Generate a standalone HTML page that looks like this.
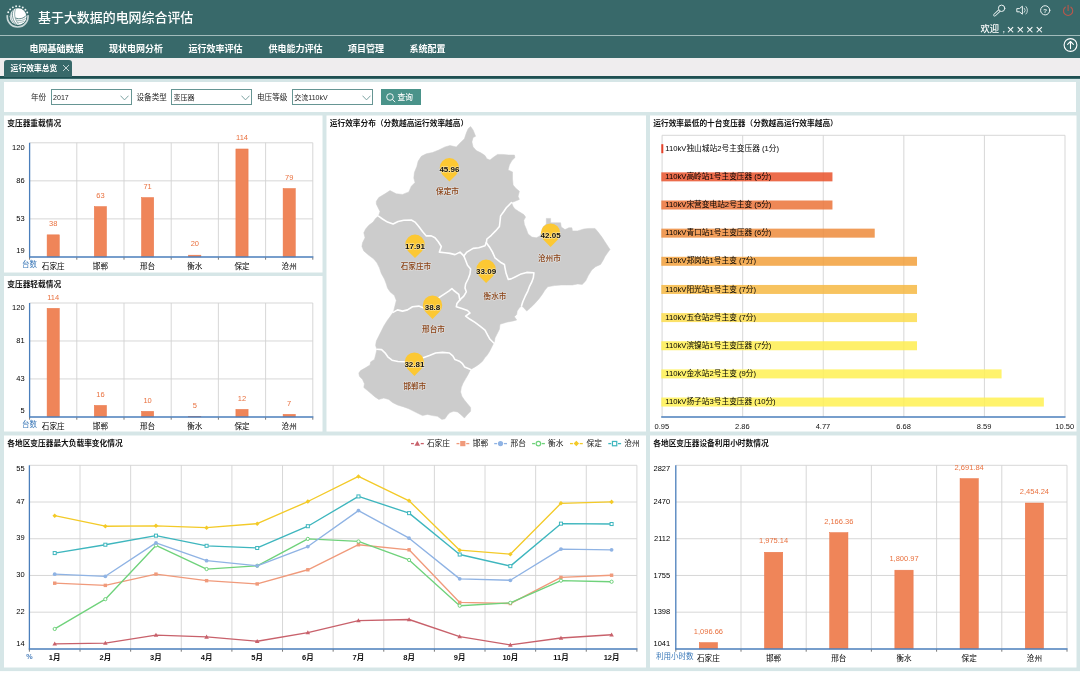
<!DOCTYPE html>
<html lang="zh-CN"><head><meta charset="utf-8"><title>基于大数据的电网综合评估</title>
<style>
html,body{margin:0;padding:0}
body{width:1080px;height:675px;overflow:hidden;background:#d6e6e7;font-family:"Liberation Sans","Noto Sans CJK SC",sans-serif;position:relative;color:#222}
.abs{position:absolute}
#hdr{left:0;top:0;width:1080px;height:35px;background:#38696a}
#hline{left:0;top:35.4px;width:1080px;height:1.1px;background:#a2bcbc}
#nav{left:0;top:36px;width:1080px;height:22px;background:#38696a}
#title{left:38px;top:0;height:35px;line-height:35.6px;font-size:12.95px;font-weight:500;color:#fff;white-space:nowrap}
.nv{position:absolute;top:0;height:22px;line-height:26.2px;font-size:9px;font-weight:bold;color:#fff;white-space:nowrap}
#welcome{left:980.5px;top:22.2px;font-size:9.3px;font-weight:500;line-height:14px;color:#fff;white-space:nowrap}
#welcome .cm{margin-left:3.4px}
#welcome .xx{font-size:13px;font-weight:normal;margin-left:2px;line-height:14px;vertical-align:-1.4px}
#welcome .cm+.xx{margin-left:1.7px}
#tabbar{left:0;top:58px;width:1080px;height:19px;background:#efedee}
#tabline{left:0;top:76px;width:1080px;height:2.7px;background:linear-gradient(#1f4f51 0,#1f4f51 60%,#4d7f80 100%)}
#tab{left:4px;top:60.2px;width:68px;height:17px;background:#38696a;border-radius:3px 3px 0 0;color:#fff;font-size:7.8px;font-weight:bold;line-height:17px;white-space:nowrap}
#tab span.t{position:absolute;left:6.6px;top:0}
#filter{left:4px;top:82px;width:1072px;height:29.7px;background:#fff}
.lb{position:absolute;top:89.3px;height:15.2px;line-height:18px;font-size:7.6px;color:#222;white-space:nowrap}
.sel{position:absolute;top:89.3px;height:13.6px;border:0.8px solid #669593;background:#fff;font-size:7px;line-height:15.2px;color:#222;white-space:nowrap;box-sizing:content-box}
.sel span{position:absolute;left:1.6px;top:0}
.sel svg{position:absolute;right:1.5px;top:4.9px}
#btn{left:380.8px;top:89px;width:40px;height:15.5px;background:#4a938a;color:#fff;font-size:7.7px;font-weight:500;line-height:17.6px;white-space:nowrap}
#btn span{position:absolute;left:16.8px;top:0}
svg text{font-family:"Liberation Sans","Noto Sans CJK SC",sans-serif}
#wrap{position:absolute;left:0;top:0;width:1080px;height:675px;will-change:transform}
</style></head><body><div id="wrap">
<div id="hdr" class="abs"></div><div id="hline" class="abs"></div><div id="nav" class="abs">
<div class="nv" style="left:29.4px">电网基础数据</div><div class="nv" style="left:108.9px">现状电网分析</div><div class="nv" style="left:188.4px">运行效率评估</div><div class="nv" style="left:268.4px">供电能力评估</div><div class="nv" style="left:347.9px">项目管理</div><div class="nv" style="left:409.4px">系统配置</div>
</div>
<div id="title" class="abs">基于大数据的电网综合评估</div>
<div id="welcome" class="abs">欢迎<span class="cm">,</span><span class="xx">×</span><span class="xx">×</span><span class="xx">×</span><span class="xx">×</span></div>
<svg class="abs" style="left:0;top:0" width="1080" height="60" viewBox="0 0 1080 60">
<!-- logo -->
<g fill="#f2f7f7"><circle cx="27.24" cy="12.57" r="0.95"/><circle cx="25.42" cy="9.68" r="0.95"/><circle cx="22.76" cy="7.54" r="0.95"/><circle cx="19.55" cy="6.37" r="0.95"/><circle cx="16.13" cy="6.31" r="0.95"/><circle cx="12.88" cy="7.36" r="0.95"/><circle cx="10.14" cy="9.40" r="0.95"/><circle cx="8.22" cy="12.22" r="0.95"/></g>
<path d="M7.35 15.15A10.4 10.4 0 1 0 27.95 15.15" fill="none" stroke="#eaf2f2" stroke-width="1.7" stroke-opacity="0.82"/>
<circle cx="18.1" cy="16.6" r="8.4" fill="#fff"/>
<g fill="none" stroke="#38696a" stroke-width="0.7">
<path d="M13.4 9.7C11.4 14 12.4 20.6 17 24.8"/><path d="M15.5 9.2C13.7 14 14.7 19.6 18.7 24.4" stroke-width="0.55"/>
<path d="M15.5 18C19.4 19.5 23.5 18.7 26.4 15.3" stroke-width="0.8"/><path d="M16.3 20.1C20 21.1 23.4 20.4 25.6 18.4" stroke-width="0.5"/><path d="M17.3 22.1C20 22.7 22.4 22.3 24.2 21" stroke-width="0.45"/>
<path d="M11.1 12.6C10.1 16 11.1 20.6 14.6 23.8" stroke-width="0.5"/>
</g>
<!-- icons -->
<g fill="none" stroke="#e9f1f1" stroke-width="1" stroke-linecap="round" stroke-linejoin="round">
<path d="M999.6 10.4L994.7 15" stroke-width="2.9"/><path d="M999.6 10.4L994.7 15" stroke="#38696a" stroke-width="1.2"/><circle cx="1001.6" cy="8.3" r="3.2" fill="#38696a"/>
<path d="M1017.2 8.6h2.2l3-2.4v8l-3-2.4h-2.2z"/><path d="M1024.3 8.2a3 3 0 0 1 0 4.2M1026 6.6a5.2 5.2 0 0 1 0 7.4" stroke-width="0.8"/>
<circle cx="1045.2" cy="10.3" r="4.6"/>
<circle cx="1070.5" cy="45" r="6.4" stroke="#fff" stroke-width="1.1"/><path d="M1070.5 48.6V41.6M1067.6 44.4L1070.5 41.5L1073.4 44.4" stroke="#fff" stroke-width="1.1"/>
</g>
<text x="1045.2" y="12.5" font-size="6.2" text-anchor="middle" fill="#e9f1f1" font-weight="bold">?</text>
<g fill="none" stroke="#b8574c" stroke-width="1.1" stroke-linecap="round"><path d="M1065.3 7.2a4.6 4.6 0 1 0 5.6 0"/><path d="M1068.1 5.4v5"/></g>
</svg>
<div id="tabbar" class="abs"></div><div id="tabline" class="abs"></div>
<div id="tab" class="abs"><span class="t">运行效率总览</span>
<svg class="abs" style="left:57.8px;top:3.8px" width="8" height="8" viewBox="0 0 8 8"><path d="M1 1L7 7M7 1L1 7" stroke="#e8f0f0" stroke-width="0.8"/></svg></div>
<div id="filter" class="abs"></div>
<div class="lb" style="left:31px">年份</div>
<div class="sel" style="left:50.5px;width:79.4px"><span>2017</span><svg width="9" height="6" viewBox="0 0 9 6"><path d="M0.5 0.7L4.5 4.9L8.5 0.7" fill="none" stroke="#6f9a99" stroke-width="0.9"/></svg></div>
<div class="lb" style="left:136.5px">设备类型</div>
<div class="sel" style="left:171px;width:79.4px"><span>变压器</span><svg width="9" height="6" viewBox="0 0 9 6"><path d="M0.5 0.7L4.5 4.9L8.5 0.7" fill="none" stroke="#6f9a99" stroke-width="0.9"/></svg></div>
<div class="lb" style="left:257px">电压等级</div>
<div class="sel" style="left:291.7px;width:79.4px"><span>交流110kV</span><svg width="9" height="6" viewBox="0 0 9 6"><path d="M0.5 0.7L4.5 4.9L8.5 0.7" fill="none" stroke="#6f9a99" stroke-width="0.9"/></svg></div>
<div id="btn" class="abs"><svg class="abs" style="left:4.5px;top:2.9px" width="12" height="12" viewBox="0 0 12 12"><circle cx="5" cy="5" r="3.3" fill="none" stroke="#fff" stroke-width="0.9"/><path d="M7.4 7.4L10.2 10.2" stroke="#fff" stroke-width="0.9"/></svg><span>查询</span></div>
<svg class="abs" style="left:0;top:0" width="1080" height="675" viewBox="0 0 1080 675">
<rect x="0" y="671.1" width="1080" height="4" fill="#fff" />
<rect x="4" y="115.5" width="318.5" height="157" fill="#fff" />
<text x="7.3" y="126.37" font-size="7.7" text-anchor="start" font-weight="bold" fill="#111" >变压器重载情况</text>
<rect x="4" y="276" width="318.5" height="155.5" fill="#fff" />
<text x="7.3" y="286.87" font-size="7.7" text-anchor="start" font-weight="bold" fill="#111" >变压器轻载情况</text>
<rect x="326.5" y="115.5" width="319.5" height="316" fill="#fff" />
<text x="329.8" y="126.37" font-size="7.7" text-anchor="start" font-weight="bold" fill="#111" >运行效率分布（分数越高运行效率越高）</text>
<rect x="650" y="115.5" width="426.5" height="316" fill="#fff" />
<text x="653.3" y="126.37" font-size="7.7" text-anchor="start" font-weight="bold" fill="#111" >运行效率最低的十台变压器（分数越高运行效率越高）</text>
<rect x="4" y="435.5" width="642" height="232" fill="#fff" />
<text x="7.3" y="446.37" font-size="7.7" text-anchor="start" font-weight="bold" fill="#111" >各地区变压器最大负载率变化情况</text>
<rect x="650" y="435.5" width="426.5" height="232" fill="#fff" />
<text x="653.3" y="446.37" font-size="7.7" text-anchor="start" font-weight="bold" fill="#111" >各地区变压器设备利用小时数情况</text>
<line x1="29.6" y1="218.87" x2="312.8" y2="218.87" stroke="#d3d3d3" stroke-width="0.9" />
<line x1="29.6" y1="180.83" x2="312.8" y2="180.83" stroke="#d3d3d3" stroke-width="0.9" />
<line x1="29.6" y1="142.8" x2="312.8" y2="142.8" stroke="#d3d3d3" stroke-width="0.9" />
<line x1="76.8" y1="142.8" x2="76.8" y2="256.9" stroke="#d3d3d3" stroke-width="0.9" />
<line x1="124" y1="142.8" x2="124" y2="256.9" stroke="#d3d3d3" stroke-width="0.9" />
<line x1="171.2" y1="142.8" x2="171.2" y2="256.9" stroke="#d3d3d3" stroke-width="0.9" />
<line x1="218.4" y1="142.8" x2="218.4" y2="256.9" stroke="#d3d3d3" stroke-width="0.9" />
<line x1="265.6" y1="142.8" x2="265.6" y2="256.9" stroke="#d3d3d3" stroke-width="0.9" />
<line x1="312.8" y1="142.8" x2="312.8" y2="256.9" stroke="#d3d3d3" stroke-width="0.9" />
<text x="24.6" y="253.4" font-size="7.5" text-anchor="end" fill="#000" >19</text>
<text x="24.6" y="221.07" font-size="7.5" text-anchor="end" fill="#000" >53</text>
<text x="24.6" y="183.03" font-size="7.5" text-anchor="end" fill="#000" >86</text>
<text x="24.6" y="149.6" font-size="7.5" text-anchor="end" fill="#000" >120</text>
<rect x="47.1" y="234.84" width="12.2" height="22.06" fill="#ef8559" stroke="#ea7446" stroke-width="0.5"/>
<text x="53.2" y="226.04" font-size="7.5" text-anchor="middle" fill="#e9713f" >38</text>
<text x="53.2" y="269.14" font-size="7.6" text-anchor="middle" fill="#000" >石家庄</text>
<rect x="94.3" y="206.59" width="12.2" height="50.31" fill="#ef8559" stroke="#ea7446" stroke-width="0.5"/>
<text x="100.4" y="197.79" font-size="7.5" text-anchor="middle" fill="#e9713f" >63</text>
<text x="100.4" y="269.14" font-size="7.6" text-anchor="middle" fill="#000" >邯郸</text>
<rect x="141.5" y="197.56" width="12.2" height="59.34" fill="#ef8559" stroke="#ea7446" stroke-width="0.5"/>
<text x="147.6" y="188.76" font-size="7.5" text-anchor="middle" fill="#e9713f" >71</text>
<text x="147.6" y="269.14" font-size="7.6" text-anchor="middle" fill="#000" >邢台</text>
<rect x="188.7" y="255.17" width="12.2" height="1.73" fill="#ef8559" stroke="#ea7446" stroke-width="0.5"/>
<text x="194.8" y="246.37" font-size="7.5" text-anchor="middle" fill="#e9713f" >20</text>
<text x="194.8" y="269.14" font-size="7.6" text-anchor="middle" fill="#000" >衡水</text>
<rect x="235.9" y="148.98" width="12.2" height="107.92" fill="#ef8559" stroke="#ea7446" stroke-width="0.5"/>
<text x="242" y="140.18" font-size="7.5" text-anchor="middle" fill="#e9713f" >114</text>
<text x="242" y="269.14" font-size="7.6" text-anchor="middle" fill="#000" >保定</text>
<rect x="283.1" y="188.52" width="12.2" height="68.38" fill="#ef8559" stroke="#ea7446" stroke-width="0.5"/>
<text x="289.2" y="179.72" font-size="7.5" text-anchor="middle" fill="#e9713f" >79</text>
<text x="289.2" y="269.14" font-size="7.6" text-anchor="middle" fill="#000" >沧州</text>
<line x1="29.6" y1="142.8" x2="29.6" y2="257.6" stroke="#4a7ebb" stroke-width="1.3" />
<line x1="29" y1="256.9" x2="313.4" y2="256.9" stroke="#4a7ebb" stroke-width="1.5" />
<line x1="29.6" y1="257.6" x2="29.6" y2="259.7" stroke="#555" stroke-width="0.8" />
<line x1="76.8" y1="257.6" x2="76.8" y2="259.7" stroke="#555" stroke-width="0.8" />
<line x1="124" y1="257.6" x2="124" y2="259.7" stroke="#555" stroke-width="0.8" />
<line x1="171.2" y1="257.6" x2="171.2" y2="259.7" stroke="#555" stroke-width="0.8" />
<line x1="218.4" y1="257.6" x2="218.4" y2="259.7" stroke="#555" stroke-width="0.8" />
<line x1="265.6" y1="257.6" x2="265.6" y2="259.7" stroke="#555" stroke-width="0.8" />
<line x1="312.8" y1="257.6" x2="312.8" y2="259.7" stroke="#555" stroke-width="0.8" />
<text x="21.9" y="266.9" font-size="7.5" text-anchor="start" fill="#3a78b8" >台数</text>
<line x1="29.6" y1="378.93" x2="312.8" y2="378.93" stroke="#d3d3d3" stroke-width="0.9" />
<line x1="29.6" y1="340.97" x2="312.8" y2="340.97" stroke="#d3d3d3" stroke-width="0.9" />
<line x1="29.6" y1="303" x2="312.8" y2="303" stroke="#d3d3d3" stroke-width="0.9" />
<line x1="76.8" y1="303" x2="76.8" y2="416.9" stroke="#d3d3d3" stroke-width="0.9" />
<line x1="124" y1="303" x2="124" y2="416.9" stroke="#d3d3d3" stroke-width="0.9" />
<line x1="171.2" y1="303" x2="171.2" y2="416.9" stroke="#d3d3d3" stroke-width="0.9" />
<line x1="218.4" y1="303" x2="218.4" y2="416.9" stroke="#d3d3d3" stroke-width="0.9" />
<line x1="265.6" y1="303" x2="265.6" y2="416.9" stroke="#d3d3d3" stroke-width="0.9" />
<line x1="312.8" y1="303" x2="312.8" y2="416.9" stroke="#d3d3d3" stroke-width="0.9" />
<text x="24.6" y="413.4" font-size="7.5" text-anchor="end" fill="#000" >5</text>
<text x="24.6" y="381.13" font-size="7.5" text-anchor="end" fill="#000" >43</text>
<text x="24.6" y="343.17" font-size="7.5" text-anchor="end" fill="#000" >81</text>
<text x="24.6" y="309.8" font-size="7.5" text-anchor="end" fill="#000" >120</text>
<rect x="47.1" y="308.34" width="12.2" height="108.56" fill="#ef8559" stroke="#ea7446" stroke-width="0.5"/>
<text x="53.2" y="299.54" font-size="7.5" text-anchor="middle" fill="#e9713f" >114</text>
<text x="53.2" y="429.14" font-size="7.6" text-anchor="middle" fill="#000" >石家庄</text>
<rect x="94.3" y="405.41" width="12.2" height="11.49" fill="#ef8559" stroke="#ea7446" stroke-width="0.5"/>
<text x="100.4" y="396.61" font-size="7.5" text-anchor="middle" fill="#e9713f" >16</text>
<text x="100.4" y="429.14" font-size="7.6" text-anchor="middle" fill="#000" >邯郸</text>
<rect x="141.5" y="411.35" width="12.2" height="5.55" fill="#ef8559" stroke="#ea7446" stroke-width="0.5"/>
<text x="147.6" y="402.55" font-size="7.5" text-anchor="middle" fill="#e9713f" >10</text>
<text x="147.6" y="429.14" font-size="7.6" text-anchor="middle" fill="#000" >邢台</text>
<rect x="188.7" y="416.3" width="12.2" height="0.6" fill="#ef8559" stroke="#ea7446" stroke-width="0.5"/>
<text x="194.8" y="407.5" font-size="7.5" text-anchor="middle" fill="#e9713f" >5</text>
<text x="194.8" y="429.14" font-size="7.6" text-anchor="middle" fill="#000" >衡水</text>
<rect x="235.9" y="409.37" width="12.2" height="7.53" fill="#ef8559" stroke="#ea7446" stroke-width="0.5"/>
<text x="242" y="400.57" font-size="7.5" text-anchor="middle" fill="#e9713f" >12</text>
<text x="242" y="429.14" font-size="7.6" text-anchor="middle" fill="#000" >保定</text>
<rect x="283.1" y="414.32" width="12.2" height="2.58" fill="#ef8559" stroke="#ea7446" stroke-width="0.5"/>
<text x="289.2" y="405.52" font-size="7.5" text-anchor="middle" fill="#e9713f" >7</text>
<text x="289.2" y="429.14" font-size="7.6" text-anchor="middle" fill="#000" >沧州</text>
<line x1="29.6" y1="303" x2="29.6" y2="417.6" stroke="#4a7ebb" stroke-width="1.3" />
<line x1="29" y1="416.9" x2="313.4" y2="416.9" stroke="#4a7ebb" stroke-width="1.5" />
<line x1="29.6" y1="417.6" x2="29.6" y2="419.7" stroke="#555" stroke-width="0.8" />
<line x1="76.8" y1="417.6" x2="76.8" y2="419.7" stroke="#555" stroke-width="0.8" />
<line x1="124" y1="417.6" x2="124" y2="419.7" stroke="#555" stroke-width="0.8" />
<line x1="171.2" y1="417.6" x2="171.2" y2="419.7" stroke="#555" stroke-width="0.8" />
<line x1="218.4" y1="417.6" x2="218.4" y2="419.7" stroke="#555" stroke-width="0.8" />
<line x1="265.6" y1="417.6" x2="265.6" y2="419.7" stroke="#555" stroke-width="0.8" />
<line x1="312.8" y1="417.6" x2="312.8" y2="419.7" stroke="#555" stroke-width="0.8" />
<text x="21.9" y="426.9" font-size="7.5" text-anchor="start" fill="#3a78b8" >台数</text>
<line x1="675.8" y1="612.18" x2="1067" y2="612.18" stroke="#d3d3d3" stroke-width="0.9" />
<line x1="675.8" y1="575.46" x2="1067" y2="575.46" stroke="#d3d3d3" stroke-width="0.9" />
<line x1="675.8" y1="538.74" x2="1067" y2="538.74" stroke="#d3d3d3" stroke-width="0.9" />
<line x1="675.8" y1="502.02" x2="1067" y2="502.02" stroke="#d3d3d3" stroke-width="0.9" />
<line x1="675.8" y1="465.3" x2="1067" y2="465.3" stroke="#d3d3d3" stroke-width="0.9" />
<line x1="741" y1="465.3" x2="741" y2="648.9" stroke="#d3d3d3" stroke-width="0.9" />
<line x1="806.2" y1="465.3" x2="806.2" y2="648.9" stroke="#d3d3d3" stroke-width="0.9" />
<line x1="871.4" y1="465.3" x2="871.4" y2="648.9" stroke="#d3d3d3" stroke-width="0.9" />
<line x1="936.6" y1="465.3" x2="936.6" y2="648.9" stroke="#d3d3d3" stroke-width="0.9" />
<line x1="1001.8" y1="465.3" x2="1001.8" y2="648.9" stroke="#d3d3d3" stroke-width="0.9" />
<line x1="1067" y1="465.3" x2="1067" y2="648.9" stroke="#d3d3d3" stroke-width="0.9" />
<text x="670.2" y="646.3" font-size="7.5" text-anchor="end" fill="#000" >1041</text>
<text x="670.2" y="614.38" font-size="7.5" text-anchor="end" fill="#000" >1398</text>
<text x="670.2" y="577.66" font-size="7.5" text-anchor="end" fill="#000" >1755</text>
<text x="670.2" y="540.94" font-size="7.5" text-anchor="end" fill="#000" >2112</text>
<text x="670.2" y="504.22" font-size="7.5" text-anchor="end" fill="#000" >2470</text>
<text x="670.2" y="471.1" font-size="7.5" text-anchor="end" fill="#000" >2827</text>
<rect x="699.25" y="642.58" width="18.3" height="6.32" fill="#ef8559" stroke="#ea7446" stroke-width="0.5"/>
<text x="708.4" y="633.78" font-size="7.5" text-anchor="middle" fill="#e9713f" >1,096.66</text>
<text x="708.4" y="661.14" font-size="7.6" text-anchor="middle" fill="#000" >石家庄</text>
<rect x="764.45" y="552.27" width="18.3" height="96.63" fill="#ef8559" stroke="#ea7446" stroke-width="0.5"/>
<text x="773.6" y="543.47" font-size="7.5" text-anchor="middle" fill="#e9713f" >1,975.14</text>
<text x="773.6" y="661.14" font-size="7.6" text-anchor="middle" fill="#000" >邯郸</text>
<rect x="829.65" y="532.61" width="18.3" height="116.29" fill="#ef8559" stroke="#ea7446" stroke-width="0.5"/>
<text x="838.8" y="523.81" font-size="7.5" text-anchor="middle" fill="#e9713f" >2,166.36</text>
<text x="838.8" y="661.14" font-size="7.6" text-anchor="middle" fill="#000" >邢台</text>
<rect x="894.85" y="570.18" width="18.3" height="78.72" fill="#ef8559" stroke="#ea7446" stroke-width="0.5"/>
<text x="904" y="561.38" font-size="7.5" text-anchor="middle" fill="#e9713f" >1,800.97</text>
<text x="904" y="661.14" font-size="7.6" text-anchor="middle" fill="#000" >衡水</text>
<rect x="960.05" y="478.59" width="18.3" height="170.31" fill="#ef8559" stroke="#ea7446" stroke-width="0.5"/>
<text x="969.2" y="469.79" font-size="7.5" text-anchor="middle" fill="#e9713f" >2,691.84</text>
<text x="969.2" y="661.14" font-size="7.6" text-anchor="middle" fill="#000" >保定</text>
<rect x="1025.25" y="503.02" width="18.3" height="145.88" fill="#ef8559" stroke="#ea7446" stroke-width="0.5"/>
<text x="1034.4" y="494.22" font-size="7.5" text-anchor="middle" fill="#e9713f" >2,454.24</text>
<text x="1034.4" y="661.14" font-size="7.6" text-anchor="middle" fill="#000" >沧州</text>
<line x1="675.8" y1="465.3" x2="675.8" y2="649.6" stroke="#4a7ebb" stroke-width="1.3" />
<line x1="675.2" y1="648.9" x2="1067.6" y2="648.9" stroke="#4a7ebb" stroke-width="1.5" />
<line x1="675.8" y1="649.6" x2="675.8" y2="651.7" stroke="#555" stroke-width="0.8" />
<line x1="741" y1="649.6" x2="741" y2="651.7" stroke="#555" stroke-width="0.8" />
<line x1="806.2" y1="649.6" x2="806.2" y2="651.7" stroke="#555" stroke-width="0.8" />
<line x1="871.4" y1="649.6" x2="871.4" y2="651.7" stroke="#555" stroke-width="0.8" />
<line x1="936.6" y1="649.6" x2="936.6" y2="651.7" stroke="#555" stroke-width="0.8" />
<line x1="1001.8" y1="649.6" x2="1001.8" y2="651.7" stroke="#555" stroke-width="0.8" />
<line x1="1067" y1="649.6" x2="1067" y2="651.7" stroke="#555" stroke-width="0.8" />
<text x="656.1" y="658.9" font-size="7.5" text-anchor="start" fill="#3a78b8" >利用小时数</text>
<line x1="662.1" y1="135.3" x2="662.1" y2="416.9" stroke="#d3d3d3" stroke-width="0.9" />
<line x1="742.68" y1="135.3" x2="742.68" y2="416.9" stroke="#d3d3d3" stroke-width="0.9" />
<line x1="823.26" y1="135.3" x2="823.26" y2="416.9" stroke="#d3d3d3" stroke-width="0.9" />
<line x1="903.84" y1="135.3" x2="903.84" y2="416.9" stroke="#d3d3d3" stroke-width="0.9" />
<line x1="984.42" y1="135.3" x2="984.42" y2="416.9" stroke="#d3d3d3" stroke-width="0.9" />
<line x1="1065" y1="135.3" x2="1065" y2="416.9" stroke="#d3d3d3" stroke-width="0.9" />
<line x1="662.1" y1="135.3" x2="1065" y2="135.3" stroke="#d3d3d3" stroke-width="0.9" />
<rect x="661.3" y="144.2" width="2.01" height="9" fill="#e42307" fill-opacity="0.85"/>
<text x="665.2" y="150.87" font-size="7.7" text-anchor="start" fill="#000" >110kV独山城站2号主变压器 (1分)</text>
<rect x="661.3" y="172.35" width="171.15" height="9" fill="#e9522c" fill-opacity="0.85"/>
<text x="665.2" y="179.02" font-size="7.7" text-anchor="start" fill="#000" >110kV高岭站1号主变压器 (5分)</text>
<rect x="661.3" y="200.5" width="171.15" height="9" fill="#eb7338" fill-opacity="0.85"/>
<text x="665.2" y="207.17" font-size="7.7" text-anchor="start" fill="#000" >110kV宋营变电站2号主变 (5分)</text>
<rect x="661.3" y="228.65" width="213.43" height="9" fill="#ed8b3b" fill-opacity="0.85"/>
<text x="665.2" y="235.32" font-size="7.7" text-anchor="start" fill="#000" >110kV青口站1号主变压器 (6分)</text>
<rect x="661.3" y="256.8" width="255.71" height="9" fill="#f2a03b" fill-opacity="0.85"/>
<text x="665.2" y="263.47" font-size="7.7" text-anchor="start" fill="#000" >110kV郑岗站1号主变 (7分)</text>
<rect x="661.3" y="284.95" width="255.71" height="9" fill="#f6b843" fill-opacity="0.85"/>
<text x="665.2" y="291.62" font-size="7.7" text-anchor="start" fill="#000" >110kV阳光站1号主变 (7分)</text>
<rect x="661.3" y="313.1" width="255.71" height="9" fill="#fbdd4f" fill-opacity="0.85"/>
<text x="665.2" y="319.77" font-size="7.7" text-anchor="start" fill="#000" >110kV五仓站2号主变 (7分)</text>
<rect x="661.3" y="341.25" width="255.71" height="9" fill="#feed50" fill-opacity="0.85"/>
<text x="665.2" y="347.92" font-size="7.7" text-anchor="start" fill="#000" >110kV滨镍站1号主变压器 (7分)</text>
<rect x="661.3" y="369.4" width="340.28" height="9" fill="#fff152" fill-opacity="0.85"/>
<text x="665.2" y="376.07" font-size="7.7" text-anchor="start" fill="#000" >110kV金水站2号主变 (9分)</text>
<rect x="661.3" y="397.55" width="382.56" height="9" fill="#fff152" fill-opacity="0.85"/>
<text x="665.2" y="404.22" font-size="7.7" text-anchor="start" fill="#000" >110kV扬子站3号主变压器 (10分)</text>
<line x1="661.2" y1="416.9" x2="1065.5" y2="416.9" stroke="#4a7ebb" stroke-width="1.5" />
<text x="661.8" y="428.8" font-size="7.5" text-anchor="middle" fill="#111" >0.95</text>
<text x="742.38" y="428.8" font-size="7.5" text-anchor="middle" fill="#111" >2.86</text>
<text x="822.96" y="428.8" font-size="7.5" text-anchor="middle" fill="#111" >4.77</text>
<text x="903.54" y="428.8" font-size="7.5" text-anchor="middle" fill="#111" >6.68</text>
<text x="984.12" y="428.8" font-size="7.5" text-anchor="middle" fill="#111" >8.59</text>
<text x="1064.7" y="428.8" font-size="7.5" text-anchor="middle" fill="#111" >10.50</text>
<line x1="29.4" y1="612.18" x2="636.9" y2="612.18" stroke="#d3d3d3" stroke-width="0.9" />
<line x1="29.4" y1="575.46" x2="636.9" y2="575.46" stroke="#d3d3d3" stroke-width="0.9" />
<line x1="29.4" y1="538.74" x2="636.9" y2="538.74" stroke="#d3d3d3" stroke-width="0.9" />
<line x1="29.4" y1="502.02" x2="636.9" y2="502.02" stroke="#d3d3d3" stroke-width="0.9" />
<line x1="29.4" y1="465.3" x2="636.9" y2="465.3" stroke="#d3d3d3" stroke-width="0.9" />
<line x1="80.03" y1="465.3" x2="80.03" y2="648.9" stroke="#d3d3d3" stroke-width="0.9" />
<line x1="130.65" y1="465.3" x2="130.65" y2="648.9" stroke="#d3d3d3" stroke-width="0.9" />
<line x1="181.28" y1="465.3" x2="181.28" y2="648.9" stroke="#d3d3d3" stroke-width="0.9" />
<line x1="231.9" y1="465.3" x2="231.9" y2="648.9" stroke="#d3d3d3" stroke-width="0.9" />
<line x1="282.52" y1="465.3" x2="282.52" y2="648.9" stroke="#d3d3d3" stroke-width="0.9" />
<line x1="333.15" y1="465.3" x2="333.15" y2="648.9" stroke="#d3d3d3" stroke-width="0.9" />
<line x1="383.77" y1="465.3" x2="383.77" y2="648.9" stroke="#d3d3d3" stroke-width="0.9" />
<line x1="434.4" y1="465.3" x2="434.4" y2="648.9" stroke="#d3d3d3" stroke-width="0.9" />
<line x1="485.02" y1="465.3" x2="485.02" y2="648.9" stroke="#d3d3d3" stroke-width="0.9" />
<line x1="535.65" y1="465.3" x2="535.65" y2="648.9" stroke="#d3d3d3" stroke-width="0.9" />
<line x1="586.27" y1="465.3" x2="586.27" y2="648.9" stroke="#d3d3d3" stroke-width="0.9" />
<line x1="636.9" y1="465.3" x2="636.9" y2="648.9" stroke="#d3d3d3" stroke-width="0.9" />
<text x="24.6" y="645.7" font-size="7.5" text-anchor="end" fill="#000" >14</text>
<text x="24.6" y="613.78" font-size="7.5" text-anchor="end" fill="#000" >22</text>
<text x="24.6" y="577.06" font-size="7.5" text-anchor="end" fill="#000" >30</text>
<text x="24.6" y="540.34" font-size="7.5" text-anchor="end" fill="#000" >39</text>
<text x="24.6" y="503.62" font-size="7.5" text-anchor="end" fill="#000" >47</text>
<text x="24.6" y="470.5" font-size="7.5" text-anchor="end" fill="#000" >55</text>
<path d="M54.71 643.83L105.34 643.11L155.96 635.12L206.59 636.93L257.21 641.29L307.84 632.58L358.46 620.6L409.09 619.51L459.71 636.57L510.34 644.92L560.96 638.02L611.59 634.76" fill="none" stroke="#c8616b" stroke-width="1.35" stroke-linejoin="round"/>
<path d="M54.71 641.46L56.99 645.54L52.43 645.54Z" fill="#c8616b"/>
<path d="M105.34 640.73L107.62 644.82L103.06 644.82Z" fill="#c8616b"/>
<path d="M155.96 632.74L158.24 636.83L153.68 636.83Z" fill="#c8616b"/>
<path d="M206.59 634.56L208.87 638.64L204.31 638.64Z" fill="#c8616b"/>
<path d="M257.21 638.92L259.49 643L254.93 643Z" fill="#c8616b"/>
<path d="M307.84 630.2L310.12 634.29L305.56 634.29Z" fill="#c8616b"/>
<path d="M358.46 618.22L360.74 622.31L356.18 622.31Z" fill="#c8616b"/>
<path d="M409.09 617.13L411.37 621.22L406.81 621.22Z" fill="#c8616b"/>
<path d="M459.71 634.2L461.99 638.28L457.43 638.28Z" fill="#c8616b"/>
<path d="M510.34 642.55L512.62 646.63L508.06 646.63Z" fill="#c8616b"/>
<path d="M560.96 635.65L563.24 639.73L558.68 639.73Z" fill="#c8616b"/>
<path d="M611.59 632.38L613.87 636.47L609.31 636.47Z" fill="#c8616b"/>
<path d="M54.71 583.2L105.34 585.38L155.96 574.13L206.59 580.66L257.21 583.93L307.84 569.77L358.46 544.72L409.09 549.8L459.71 602.45L510.34 603.53L560.96 577.4L611.59 575.22" fill="none" stroke="#f09a7b" stroke-width="1.35" stroke-linejoin="round"/>
<rect x="53" y="581.49" width="3.42" height="3.42" fill="#f09a7b" />
<rect x="103.63" y="583.67" width="3.42" height="3.42" fill="#f09a7b" />
<rect x="154.25" y="572.42" width="3.42" height="3.42" fill="#f09a7b" />
<rect x="204.88" y="578.95" width="3.42" height="3.42" fill="#f09a7b" />
<rect x="255.5" y="582.22" width="3.42" height="3.42" fill="#f09a7b" />
<rect x="306.13" y="568.06" width="3.42" height="3.42" fill="#f09a7b" />
<rect x="356.75" y="543.01" width="3.42" height="3.42" fill="#f09a7b" />
<rect x="407.38" y="548.09" width="3.42" height="3.42" fill="#f09a7b" />
<rect x="458" y="600.74" width="3.42" height="3.42" fill="#f09a7b" />
<rect x="508.63" y="601.82" width="3.42" height="3.42" fill="#f09a7b" />
<rect x="559.25" y="575.69" width="3.42" height="3.42" fill="#f09a7b" />
<rect x="609.88" y="573.51" width="3.42" height="3.42" fill="#f09a7b" />
<path d="M54.71 628.95L105.34 599.18L155.96 545.45L206.59 569.05L257.21 565.78L307.84 538.91L358.46 541.45L409.09 559.97L459.71 605.71L510.34 602.81L560.96 580.66L611.59 581.75" fill="none" stroke="#6fd27b" stroke-width="1.35" stroke-linejoin="round"/>
<circle cx="54.71" cy="628.95" r="1.61" fill="#fff" stroke="#6fd27b" stroke-width="1"/>
<circle cx="105.34" cy="599.18" r="1.61" fill="#fff" stroke="#6fd27b" stroke-width="1"/>
<circle cx="155.96" cy="545.45" r="1.61" fill="#fff" stroke="#6fd27b" stroke-width="1"/>
<circle cx="206.59" cy="569.05" r="1.61" fill="#fff" stroke="#6fd27b" stroke-width="1"/>
<circle cx="257.21" cy="565.78" r="1.61" fill="#fff" stroke="#6fd27b" stroke-width="1"/>
<circle cx="307.84" cy="538.91" r="1.61" fill="#fff" stroke="#6fd27b" stroke-width="1"/>
<circle cx="358.46" cy="541.45" r="1.61" fill="#fff" stroke="#6fd27b" stroke-width="1"/>
<circle cx="409.09" cy="559.97" r="1.61" fill="#fff" stroke="#6fd27b" stroke-width="1"/>
<circle cx="459.71" cy="605.71" r="1.61" fill="#fff" stroke="#6fd27b" stroke-width="1"/>
<circle cx="510.34" cy="602.81" r="1.61" fill="#fff" stroke="#6fd27b" stroke-width="1"/>
<circle cx="560.96" cy="580.66" r="1.61" fill="#fff" stroke="#6fd27b" stroke-width="1"/>
<circle cx="611.59" cy="581.75" r="1.61" fill="#fff" stroke="#6fd27b" stroke-width="1"/>
<path d="M54.71 574.13L105.34 576.31L155.96 542.91L206.59 560.7L257.21 565.78L307.84 546.54L358.46 510.6L409.09 538.19L459.71 578.85L510.34 580.3L560.96 549.08L611.59 549.8" fill="none" stroke="#8fb3e4" stroke-width="1.35" stroke-linejoin="round"/>
<circle cx="54.71" cy="574.13" r="1.9" fill="#8fb3e4"/>
<circle cx="105.34" cy="576.31" r="1.9" fill="#8fb3e4"/>
<circle cx="155.96" cy="542.91" r="1.9" fill="#8fb3e4"/>
<circle cx="206.59" cy="560.7" r="1.9" fill="#8fb3e4"/>
<circle cx="257.21" cy="565.78" r="1.9" fill="#8fb3e4"/>
<circle cx="307.84" cy="546.54" r="1.9" fill="#8fb3e4"/>
<circle cx="358.46" cy="510.6" r="1.9" fill="#8fb3e4"/>
<circle cx="409.09" cy="538.19" r="1.9" fill="#8fb3e4"/>
<circle cx="459.71" cy="578.85" r="1.9" fill="#8fb3e4"/>
<circle cx="510.34" cy="580.3" r="1.9" fill="#8fb3e4"/>
<circle cx="560.96" cy="549.08" r="1.9" fill="#8fb3e4"/>
<circle cx="611.59" cy="549.8" r="1.9" fill="#8fb3e4"/>
<path d="M54.71 515.68L105.34 526.21L155.96 525.84L206.59 527.66L257.21 523.66L307.84 501.52L358.46 476.47L409.09 500.79L459.71 550.17L510.34 554.16L560.96 503.33L611.59 501.88" fill="none" stroke="#f3ca28" stroke-width="1.35" stroke-linejoin="round"/>
<path d="M54.71 513.4L56.99 515.68L54.71 517.96L52.43 515.68Z" fill="#f3ca28"/>
<path d="M105.34 523.93L107.62 526.21L105.34 528.49L103.06 526.21Z" fill="#f3ca28"/>
<path d="M155.96 523.56L158.24 525.84L155.96 528.12L153.68 525.84Z" fill="#f3ca28"/>
<path d="M206.59 525.38L208.87 527.66L206.59 529.94L204.31 527.66Z" fill="#f3ca28"/>
<path d="M257.21 521.38L259.49 523.66L257.21 525.94L254.93 523.66Z" fill="#f3ca28"/>
<path d="M307.84 499.24L310.12 501.52L307.84 503.8L305.56 501.52Z" fill="#f3ca28"/>
<path d="M358.46 474.19L360.74 476.47L358.46 478.75L356.18 476.47Z" fill="#f3ca28"/>
<path d="M409.09 498.51L411.37 500.79L409.09 503.07L406.81 500.79Z" fill="#f3ca28"/>
<path d="M459.71 547.89L461.99 550.17L459.71 552.45L457.43 550.17Z" fill="#f3ca28"/>
<path d="M510.34 551.88L512.62 554.16L510.34 556.44L508.06 554.16Z" fill="#f3ca28"/>
<path d="M560.96 501.05L563.24 503.33L560.96 505.61L558.68 503.33Z" fill="#f3ca28"/>
<path d="M611.59 499.6L613.87 501.88L611.59 504.16L609.31 501.88Z" fill="#f3ca28"/>
<path d="M54.71 553.07L105.34 544.72L155.96 535.65L206.59 545.81L257.21 547.99L307.84 526.21L358.46 496.44L409.09 513.14L459.71 554.52L510.34 566.14L560.96 523.66L611.59 524.03" fill="none" stroke="#3eb6be" stroke-width="1.35" stroke-linejoin="round"/>
<rect x="53.19" y="551.55" width="3.04" height="3.04" fill="#fff" stroke="#3eb6be" stroke-width="1"/>
<rect x="103.82" y="543.2" width="3.04" height="3.04" fill="#fff" stroke="#3eb6be" stroke-width="1"/>
<rect x="154.44" y="534.13" width="3.04" height="3.04" fill="#fff" stroke="#3eb6be" stroke-width="1"/>
<rect x="205.07" y="544.29" width="3.04" height="3.04" fill="#fff" stroke="#3eb6be" stroke-width="1"/>
<rect x="255.69" y="546.47" width="3.04" height="3.04" fill="#fff" stroke="#3eb6be" stroke-width="1"/>
<rect x="306.32" y="524.69" width="3.04" height="3.04" fill="#fff" stroke="#3eb6be" stroke-width="1"/>
<rect x="356.94" y="494.92" width="3.04" height="3.04" fill="#fff" stroke="#3eb6be" stroke-width="1"/>
<rect x="407.57" y="511.62" width="3.04" height="3.04" fill="#fff" stroke="#3eb6be" stroke-width="1"/>
<rect x="458.19" y="553" width="3.04" height="3.04" fill="#fff" stroke="#3eb6be" stroke-width="1"/>
<rect x="508.82" y="564.62" width="3.04" height="3.04" fill="#fff" stroke="#3eb6be" stroke-width="1"/>
<rect x="559.44" y="522.14" width="3.04" height="3.04" fill="#fff" stroke="#3eb6be" stroke-width="1"/>
<rect x="610.07" y="522.51" width="3.04" height="3.04" fill="#fff" stroke="#3eb6be" stroke-width="1"/>
<line x1="29.4" y1="465.3" x2="29.4" y2="649.6" stroke="#4a7ebb" stroke-width="1.3" />
<line x1="28.8" y1="648.9" x2="637.5" y2="648.9" stroke="#4a7ebb" stroke-width="1.5" />
<line x1="29.4" y1="649.6" x2="29.4" y2="651.7" stroke="#555" stroke-width="0.8" />
<line x1="80.03" y1="649.6" x2="80.03" y2="651.7" stroke="#555" stroke-width="0.8" />
<line x1="130.65" y1="649.6" x2="130.65" y2="651.7" stroke="#555" stroke-width="0.8" />
<line x1="181.28" y1="649.6" x2="181.28" y2="651.7" stroke="#555" stroke-width="0.8" />
<line x1="231.9" y1="649.6" x2="231.9" y2="651.7" stroke="#555" stroke-width="0.8" />
<line x1="282.52" y1="649.6" x2="282.52" y2="651.7" stroke="#555" stroke-width="0.8" />
<line x1="333.15" y1="649.6" x2="333.15" y2="651.7" stroke="#555" stroke-width="0.8" />
<line x1="383.77" y1="649.6" x2="383.77" y2="651.7" stroke="#555" stroke-width="0.8" />
<line x1="434.4" y1="649.6" x2="434.4" y2="651.7" stroke="#555" stroke-width="0.8" />
<line x1="485.02" y1="649.6" x2="485.02" y2="651.7" stroke="#555" stroke-width="0.8" />
<line x1="535.65" y1="649.6" x2="535.65" y2="651.7" stroke="#555" stroke-width="0.8" />
<line x1="586.27" y1="649.6" x2="586.27" y2="651.7" stroke="#555" stroke-width="0.8" />
<line x1="636.9" y1="649.6" x2="636.9" y2="651.7" stroke="#555" stroke-width="0.8" />
<text x="54.71" y="660.1" font-size="7.5" text-anchor="middle" font-weight="bold" fill="#111" >1月</text>
<text x="105.34" y="660.1" font-size="7.5" text-anchor="middle" font-weight="bold" fill="#111" >2月</text>
<text x="155.96" y="660.1" font-size="7.5" text-anchor="middle" font-weight="bold" fill="#111" >3月</text>
<text x="206.59" y="660.1" font-size="7.5" text-anchor="middle" font-weight="bold" fill="#111" >4月</text>
<text x="257.21" y="660.1" font-size="7.5" text-anchor="middle" font-weight="bold" fill="#111" >5月</text>
<text x="307.84" y="660.1" font-size="7.5" text-anchor="middle" font-weight="bold" fill="#111" >6月</text>
<text x="358.46" y="660.1" font-size="7.5" text-anchor="middle" font-weight="bold" fill="#111" >7月</text>
<text x="409.09" y="660.1" font-size="7.5" text-anchor="middle" font-weight="bold" fill="#111" >8月</text>
<text x="459.71" y="660.1" font-size="7.5" text-anchor="middle" font-weight="bold" fill="#111" >9月</text>
<text x="510.34" y="660.1" font-size="7.5" text-anchor="middle" font-weight="bold" fill="#111" >10月</text>
<text x="560.96" y="660.1" font-size="7.5" text-anchor="middle" font-weight="bold" fill="#111" >11月</text>
<text x="611.59" y="660.1" font-size="7.5" text-anchor="middle" font-weight="bold" fill="#111" >12月</text>
<text x="26.3" y="658.59" font-size="7.2" text-anchor="start" font-weight="bold" fill="#4a7fbc" >%</text>
<line x1="411" y1="443.6" x2="413.9" y2="443.6" stroke="#c8616b" stroke-width="1.3" />
<line x1="420.7" y1="443.6" x2="423.8" y2="443.6" stroke="#c8616b" stroke-width="1.3" />
<path d="M417.3 440.73L420.06 445.67L414.54 445.67Z" fill="#c8616b"/>
<text x="426.9" y="446.37" font-size="7.7" text-anchor="start" fill="#111" >石家庄</text>
<line x1="456.5" y1="443.6" x2="459.4" y2="443.6" stroke="#f09a7b" stroke-width="1.3" />
<line x1="466.2" y1="443.6" x2="469.3" y2="443.6" stroke="#f09a7b" stroke-width="1.3" />
<rect x="460.19" y="440.99" width="5.22" height="5.22" fill="#f09a7b" />
<text x="472.7" y="446.37" font-size="7.7" text-anchor="start" fill="#111" >邯郸</text>
<line x1="494.2" y1="443.6" x2="497.1" y2="443.6" stroke="#8fb3e4" stroke-width="1.3" />
<line x1="503.9" y1="443.6" x2="507" y2="443.6" stroke="#8fb3e4" stroke-width="1.3" />
<circle cx="500.5" cy="443.6" r="2.6" fill="#8fb3e4"/>
<text x="510.5" y="446.37" font-size="7.7" text-anchor="start" fill="#111" >邢台</text>
<line x1="532.1" y1="443.6" x2="535" y2="443.6" stroke="#6fd27b" stroke-width="1.3" />
<line x1="541.8" y1="443.6" x2="544.9" y2="443.6" stroke="#6fd27b" stroke-width="1.3" />
<circle cx="538.4" cy="443.6" r="2.29" fill="#fff" stroke="#6fd27b" stroke-width="1.22"/>
<text x="548.1" y="446.37" font-size="7.7" text-anchor="start" fill="#111" >衡水</text>
<line x1="570" y1="443.6" x2="572.9" y2="443.6" stroke="#f3ca28" stroke-width="1.3" />
<line x1="579.7" y1="443.6" x2="582.8" y2="443.6" stroke="#f3ca28" stroke-width="1.3" />
<path d="M576.3 440.84L579.06 443.6L576.3 446.36L573.54 443.6Z" fill="#f3ca28"/>
<text x="586.5" y="446.37" font-size="7.7" text-anchor="start" fill="#111" >保定</text>
<line x1="608.3" y1="443.6" x2="611.2" y2="443.6" stroke="#3eb6be" stroke-width="1.3" />
<line x1="618" y1="443.6" x2="621.1" y2="443.6" stroke="#3eb6be" stroke-width="1.3" />
<rect x="612.44" y="441.44" width="4.32" height="4.32" fill="#fff" stroke="#3eb6be" stroke-width="1.22"/>
<text x="624.2" y="446.37" font-size="7.7" text-anchor="start" fill="#111" >沧州</text>
<path d="M378.5 216.1L380 211.5L378.1 207.8L376.3 204L376.3 201.3L378.8 197.5L385 193.8L390 190.6L396.3 193.8L402.5 194.4L408.8 191.9L411.3 186.3L415 182.5L413.8 178.1L414.4 172.5L416.9 166.3L418.1 161.3L421.3 156.3L426.3 153.8L432.5 152.5L438.8 150L445 146.9L450 145.6L456.3 146.9L460 143.1L464.4 138.8L466.3 133.1L468.1 128.8L470.6 126.5L473.1 130L475.6 136.3L473.1 137.5L471.9 141.9L473.1 146.9L476.3 150.6L481.3 153.1L485 155.6L486.9 158.8L490 160L493.1 157.5L497.5 154.4L502.5 154.4L508.8 155L514.4 155L515 157.5L511.9 160.6L509.4 165L508.1 170L512.5 171.9L512.5 178.8L513.1 185L515.6 188.1L519.4 191.3L518.1 196.3L519.4 199.4L515 201.3L511.5 202.5L506.3 207.8L503.8 211.5L500.6 215.9L500 221.5L499.4 226.5L495.6 230.9L491.3 235.3L486.9 239L486.3 242.8L485 245.8L478.8 247.8L473.1 248.4L466.9 252.1L463.8 255.9L460 252.1L455 254.6L450 253.4L445 252.8L439.4 252.1L441.3 246.5L438.1 241.5L435 237.8L431.3 235.9L426.3 235.9L422.5 231.5L418.8 226.5L415 222.1L411.3 220L403.8 220.3L398.1 221.5L393.1 224L387.5 222.1L382.5 219Z" fill="#cccccc" stroke="#cccccc" stroke-width="0.5" stroke-linejoin="round"/>
<path d="M378.5 216.1L382.5 219L387.5 222.1L393.1 224L398.1 221.5L403.8 220.3L411.3 220L415 222.1L418.8 226.5L422.5 231.5L426.3 235.9L431.3 235.9L435 237.8L438.1 241.5L441.3 246.5L439.4 252.1L445 252.8L450 253.4L455 254.6L460 252.1L463.8 255.9L465.6 260.3L467.5 265.3L470.6 269L470 274L468.1 279L465.6 284L465 288L466.3 291.8L463.8 296.1L459.8 299.9L458.8 294.3L453.8 290.5L451.9 288.6L448.8 291.1L445 293.6L440 296.8L437 299.5L433 303L428 307L423.8 308L418.8 306.1L412.5 306.8L407.5 309.9L402.5 311.1L397.5 309.9L393.1 312.4L393.8 310.5L395 305.5L396.3 300.5L394.4 295.5L390 291.8L387.5 288L386.3 284L384.4 279L381.3 273.4L379.4 267.8L376.9 262.8L373.8 259L368.8 255.3L363.8 250.9L361.9 246.5L362.5 242.8L365 237.8L363.8 232.8L365.6 229L368.8 225.3L373.1 222.1L375.6 218.4Z" fill="#cccccc" stroke="#cccccc" stroke-width="0.5" stroke-linejoin="round"/>
<path d="M486.3 242.8L486.9 239L491.3 235.3L495.6 230.9L499.4 226.5L500 221.5L500.6 215.9L503.8 211.5L506.3 207.8L511.5 202.5L513.1 206.5L515 209L518.8 211.5L523.8 214.6L525.6 217.1L523.8 220.3L524.4 224.6L526.3 229L528.1 234L531.9 237.1L536.3 237.8L540 235.9L541.9 231.5L543 227L546.3 224L546.3 218.4L550.6 218.4L550.6 222.8L555.6 222.8L560.6 222.8L561.3 227.1L565 229.6L568.8 227.8L571.9 227.8L572.5 230.9L577.5 230.9L583.8 229L588.8 228.4L595 228.4L598.1 232.1L601.9 237.1L605.6 242.8L610 249.6L608.1 252.1L605 256.5L603.3 260L600.6 264.4L595.6 266.7L591.7 270L588.3 275.6L585.6 281.1L582.2 284.4L577.8 283.9L572.2 285L566.7 285L561.1 285L554.4 285.6L547.8 286.7L545 290L542.2 294.4L538.9 298.9L534.4 303.9L530 308.3L526.7 311.1L523.5 307.5L521.5 306L522.8 301.7L525 296.7L527.8 291.1L529.4 286.7L531.7 282.2L533.3 277.8L533.9 272.8L526.7 272.4L521.1 273.9L515.6 276.7L511.1 278.9L508.3 279.4L506.1 273.3L505 267.8L504.4 264.5L501.3 262.8L495 257.8L492.5 252.1L490 247.8Z" fill="#cccccc" stroke="#cccccc" stroke-width="0.5" stroke-linejoin="round"/>
<path d="M463.8 255.9L466.9 252.1L473.1 248.4L478.8 247.8L485 245.8L486.3 242.8L490 247.8L492.5 252.1L495 257.8L501.3 262.8L504.4 264.5L505 267.8L506.1 273.3L508.3 279.4L511.1 278.9L515.6 276.7L521.1 273.9L526.7 272.4L533.9 272.8L533.3 277.8L531.7 282.2L529.4 286.7L527.8 291.1L525 296.7L522.8 301.7L521.5 306L519.4 307.8L517.2 311.1L516.7 314.4L514.4 316.7L516.7 320L513.3 320.9L506.7 322.2L500 324.3L499.4 329.3L496.9 334.3L495 338L494.4 341.8L493.8 343L490 339.3L487.5 334.9L485 330.2L480 326.1L475 322.4L470 319.3L465.6 316.1L470 313L467.5 310.5L461.9 308.6L456.3 306.8L456.9 303.6L459.8 299.9L463.8 296.1L466.3 291.8L465 288L465.6 284L468.1 279L470 274L470.6 269L467.5 265.3L465.6 260.3Z" fill="#cccccc" stroke="#cccccc" stroke-width="0.5" stroke-linejoin="round"/>
<path d="M393.1 312.4L397.5 309.9L402.5 311.1L407.5 309.9L412.5 306.8L418.8 306.1L423.8 308L428 307L433 303L437 299.5L440 296.8L445 293.6L448.8 291.1L451.9 288.6L453.8 290.5L458.8 294.3L459.8 299.9L456.9 303.6L456.3 306.8L461.9 308.6L467.5 310.5L470 313L465.6 316.1L470 319.3L475 322.4L480 326.1L485 330.2L487.5 334.9L490 339.3L493.8 343L491.9 346.8L489.4 351.8L486.9 355.5L485 357.5L482.5 361.3L478.8 364.4L475 366.9L470.6 369.4L464.7 367.1L462.5 363.7L459.4 361.2L455 359.6L452.8 355.8L449.4 353L442.5 352.4L435.6 353L429.4 355.5L423.8 357.4L414 361L405 361.8L398 361.5L392 360.2L387.8 356.8L385 352.8L381.6 349.6L376.9 349.3L375.6 345.5L376.3 341.1L378.8 336.1L381.3 331.1L383.8 326.1L386.9 321.1L390 316.8Z" fill="#cccccc" stroke="#cccccc" stroke-width="0.5" stroke-linejoin="round"/>
<path d="M376.9 349.3L381.6 349.6L385 352.8L387.8 356.8L392 360.2L398 361.5L405 361.8L414 361L423.8 357.4L429.4 355.5L435.6 353L442.5 352.4L449.4 353L452.8 355.8L455 359.6L459.4 361.2L462.5 363.7L464.7 367.1L470.6 369.4L468.1 374.4L465.6 378.8L463.1 383.1L461.3 387.5L460.6 391.9L461.9 396.3L464.4 400L467.5 403.8L470.6 407.5L470.6 411.3L466.9 415L464.4 418.1L461.3 415L457.5 411.9L453.8 411.3L450 412.5L447.5 415L445 418.8L441.9 419.4L437.5 416.3L432.5 415.6L427.5 414.4L422.5 415.6L418.8 413.8L413.8 411.3L408.8 408.8L403.8 406.9L397.5 405L392.5 402.5L388.8 399.4L383.8 398.1L378.8 399.4L375 396.9L371.3 393.8L367.5 390.6L363.8 387.5L364.4 383.8L362.5 379.4L359.4 376.3L358.8 373.1L360.6 370.6L365 368.1L370 365L370.6 361.9L374.4 359.4L375.6 355Z" fill="#cccccc" stroke="#cccccc" stroke-width="0.5" stroke-linejoin="round"/>
<path d="M378.5 216.1L382.5 219L387.5 222.1L393.1 224L398.1 221.5L403.8 220.3L411.3 220L415 222.1L418.8 226.5L422.5 231.5L426.3 235.9L431.3 235.9L435 237.8L438.1 241.5L441.3 246.5L439.4 252.1L445 252.8L450 253.4L455 254.6L460 252.1L463.8 255.9" fill="none" stroke="#fff" stroke-width="1.6" stroke-linejoin="round" stroke-linecap="round"/>
<path d="M463.8 255.9L466.9 252.1L473.1 248.4L478.8 247.8L485 245.8L486.3 242.8" fill="none" stroke="#fff" stroke-width="1.6" stroke-linejoin="round" stroke-linecap="round"/>
<path d="M486.3 242.8L486.9 239L491.3 235.3L495.6 230.9L499.4 226.5L500 221.5L500.6 215.9L503.8 211.5L506.3 207.8L511.5 202.5" fill="none" stroke="#fff" stroke-width="1.6" stroke-linejoin="round" stroke-linecap="round"/>
<path d="M486.3 242.8L490 247.8L492.5 252.1L495 257.8L501.3 262.8L504.4 264.5L505 267.8L506.1 273.3L508.3 279.4L511.1 278.9L515.6 276.7L521.1 273.9L526.7 272.4L533.9 272.8L533.3 277.8L531.7 282.2L529.4 286.7L527.8 291.1L525 296.7L522.8 301.7L521.5 306" fill="none" stroke="#fff" stroke-width="1.6" stroke-linejoin="round" stroke-linecap="round"/>
<path d="M463.8 255.9L465.6 260.3L467.5 265.3L470.6 269L470 274L468.1 279L465.6 284L465 288L466.3 291.8L463.8 296.1L459.8 299.9" fill="none" stroke="#fff" stroke-width="1.6" stroke-linejoin="round" stroke-linecap="round"/>
<path d="M393.1 312.4L397.5 309.9L402.5 311.1L407.5 309.9L412.5 306.8L418.8 306.1L423.8 308L428 307L433 303L437 299.5L440 296.8L445 293.6L448.8 291.1L451.9 288.6L453.8 290.5L458.8 294.3L459.8 299.9" fill="none" stroke="#fff" stroke-width="1.6" stroke-linejoin="round" stroke-linecap="round"/>
<path d="M459.8 299.9L456.9 303.6L456.3 306.8L461.9 308.6L467.5 310.5L470 313L465.6 316.1L470 319.3L475 322.4L480 326.1L485 330.2L487.5 334.9L490 339.3L493.8 343" fill="none" stroke="#fff" stroke-width="1.6" stroke-linejoin="round" stroke-linecap="round"/>
<path d="M376.9 349.3L381.6 349.6L385 352.8L387.8 356.8L392 360.2L398 361.5L405 361.8L414 361L423.8 357.4L429.4 355.5L435.6 353L442.5 352.4L449.4 353L452.8 355.8L455 359.6L459.4 361.2L462.5 363.7L464.7 367.1L470.6 369.4" fill="none" stroke="#fff" stroke-width="1.6" stroke-linejoin="round" stroke-linecap="round"/>
<path d="M449.4 181.6L442.54 174.66A9.7 9.7 0 1 1 456.26 174.66Z" fill="#fcc833"/>
<text x="449.4" y="172.28" font-size="8" text-anchor="middle" font-weight="bold" fill="#111" stroke="#fff" stroke-opacity="0.45" stroke-width="1.3" paint-order="stroke" stroke-linejoin="round">45.96</text>
<text x="447.5" y="193.74" font-size="7.6" text-anchor="middle" font-weight="500" fill="#8c4519" stroke="#fff" stroke-opacity="0.3" stroke-width="1.5" paint-order="stroke" stroke-linejoin="round">保定市</text>
<path d="M415 258.1L408.14 251.16A9.7 9.7 0 1 1 421.86 251.16Z" fill="#fcc833"/>
<text x="415" y="248.78" font-size="8" text-anchor="middle" font-weight="bold" fill="#111" stroke="#fff" stroke-opacity="0.45" stroke-width="1.3" paint-order="stroke" stroke-linejoin="round">17.91</text>
<text x="415.9" y="269.24" font-size="7.6" text-anchor="middle" font-weight="500" fill="#8c4519" stroke="#fff" stroke-opacity="0.3" stroke-width="1.5" paint-order="stroke" stroke-linejoin="round">石家庄市</text>
<path d="M550.6 246.9L543.74 239.96A9.7 9.7 0 1 1 557.46 239.96Z" fill="#fcc833"/>
<text x="550.6" y="237.58" font-size="8" text-anchor="middle" font-weight="bold" fill="#111" stroke="#fff" stroke-opacity="0.45" stroke-width="1.3" paint-order="stroke" stroke-linejoin="round">42.05</text>
<text x="549.4" y="260.94" font-size="7.6" text-anchor="middle" font-weight="500" fill="#8c4519" stroke="#fff" stroke-opacity="0.3" stroke-width="1.5" paint-order="stroke" stroke-linejoin="round">沧州市</text>
<path d="M486.1 283.1L479.24 276.16A9.7 9.7 0 1 1 492.96 276.16Z" fill="#fcc833"/>
<text x="486.1" y="273.78" font-size="8" text-anchor="middle" font-weight="bold" fill="#111" stroke="#fff" stroke-opacity="0.45" stroke-width="1.3" paint-order="stroke" stroke-linejoin="round">33.09</text>
<text x="495" y="298.84" font-size="7.6" text-anchor="middle" font-weight="500" fill="#8c4519" stroke="#fff" stroke-opacity="0.3" stroke-width="1.5" paint-order="stroke" stroke-linejoin="round">衡水市</text>
<path d="M432.5 319L425.64 312.06A9.7 9.7 0 1 1 439.36 312.06Z" fill="#fcc833"/>
<text x="432.5" y="309.68" font-size="8" text-anchor="middle" font-weight="bold" fill="#111" stroke="#fff" stroke-opacity="0.45" stroke-width="1.3" paint-order="stroke" stroke-linejoin="round">38.8</text>
<text x="433.5" y="331.74" font-size="7.6" text-anchor="middle" font-weight="500" fill="#8c4519" stroke="#fff" stroke-opacity="0.3" stroke-width="1.5" paint-order="stroke" stroke-linejoin="round">邢台市</text>
<path d="M414.4 376L407.54 369.06A9.7 9.7 0 1 1 421.26 369.06Z" fill="#fcc833"/>
<text x="414.4" y="366.68" font-size="8" text-anchor="middle" font-weight="bold" fill="#111" stroke="#fff" stroke-opacity="0.45" stroke-width="1.3" paint-order="stroke" stroke-linejoin="round">32.81</text>
<text x="414.8" y="388.54" font-size="7.6" text-anchor="middle" font-weight="500" fill="#8c4519" stroke="#fff" stroke-opacity="0.3" stroke-width="1.5" paint-order="stroke" stroke-linejoin="round">邯郸市</text>
</svg>
</div></body></html>
